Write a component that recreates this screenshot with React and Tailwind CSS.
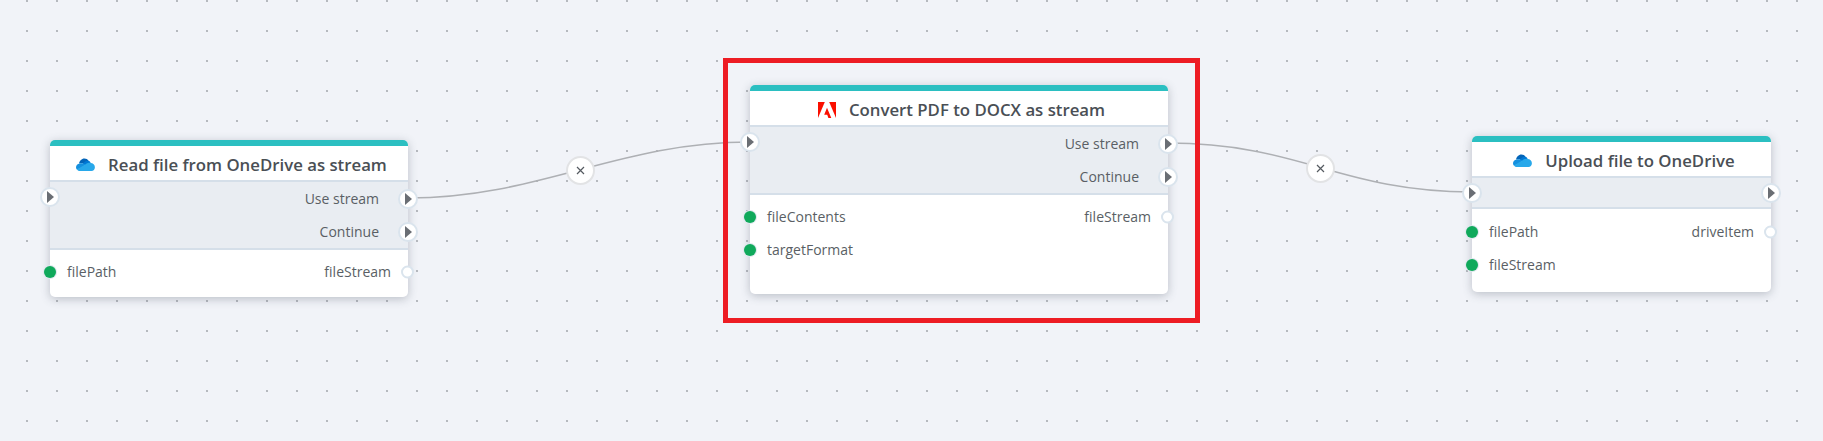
const PORT_LINE = 'absolute -translate-y-1/2 rounded-full'

function OneDriveIcon() {
  return (
    <svg width="19" height="13" viewBox="0 0 19 13" className="shrink-0">
      <path d="M3 5.500C3.600 3 5.600 .6 8.400 .6c1.800 0 3.200.9 4.100 2.200L9 6.500 7.200 5.600C5.800 5 4.400 5 3 5.500Z" fill="#0364b8" />
      <path d="M7 5.300c2-2.300 3.500-3 5.500-2.500 1 .3 1.600 1 2.100 2.100L12 9 7 6.200Z" fill="#0078d4" />
      <path d="M3.500 5.400C1.500 5.600 0 7.300 0 9.200c0 .9.300 1.600.8 2.200L7 9.500l2.500-3.100-2.300-1C6 5 4.800 5.100 3.500 5.400Z" fill="#1490df" />
      <path d="M14.600 4.900c-2-.4-4 .3-5.300 1.700L.8 11.400c.7.900 1.600 1.500 3 1.500h11.700c1.900 0 3.400-1.500 3.400-3.700 0-2.400-1.900-4.300-4.300-4.300Z" fill="#28a8ea" />
    </svg>
  )
}

function AdobeIcon() {
  return (
    <svg width="18" height="16" viewBox="0 0 18 16" className="shrink-0">
      <path d="M0 0h6.800L0 16Z" fill="#fa0f00" />
      <path d="M11.200 0H18v16Z" fill="#fa0f00" />
      <path d="M9 5.800l4.300 10.200h-2.900l-1.200-3.200H6.200Z" fill="#fa0f00" />
    </svg>
  )
}

function ExecPort({ className }) {
  return (
    <span className={`${PORT_LINE} w-[20px] h-[20px] bg-white border-2 border-[#dae4ed] flex items-center justify-center ${className}`}>
      <svg width="7" height="12" viewBox="0 0 7 12" className="ml-[1px]">
        <path d="M0 0l7 6-7 6Z" fill="#6a6e74" />
      </svg>
    </span>
  )
}

function DataRow({ left, right }) {
  return (
    <div className="relative h-[33px] flex items-center justify-between px-[17px]">
      <span>{left}</span>
      <span>{right}</span>
      {left && <span className={`${PORT_LINE} top-1/2 -left-[6px] w-[12px] h-[12px] bg-[#10a95b] shadow-[0_0_0_1px_#dfe7ee]`} />}
      {right && <span className={`${PORT_LINE} top-1/2 -right-[6px] w-[13px] h-[13px] bg-white border-2 border-[#dae4ed]`} />}
    </div>
  )
}

function FlowNode({ place, icon, title, execClass, dataClass, outputs, rows }) {
  return (
    <div className={`absolute ${place} bg-white rounded-[5px] flex flex-col shadow-[0_2px_10px_rgba(70,80,95,0.32)] text-[14px] text-[#5a5f65]`}>
      <div className="h-[6px] rounded-t-[5px] bg-[#2bbfc1]" />
      <div className="h-[36px] pl-[5px] pt-[3px] flex items-center justify-center gap-[13px] border-b-2 border-[#d5dfe9]">
        {icon}
        <span className="text-[16.8px] font-semibold text-[#4a4f55]">{title}</span>
      </div>
      <div className={`relative ${execClass} bg-[#e9edf2] border-b-2 border-[#d5dfe9]`}>
        <ExecPort className="top-[15px] -left-[10px]" />
        {outputs.map((label) => (
          <div key={label || 'out'} className="relative h-full max-h-[33px] min-h-[28px] flex items-center justify-end pr-[29px]">
            {label}
            <ExecPort className="top-1/2 -right-[10px]" />
          </div>
        ))}
      </div>
      <div className={dataClass}>
        {rows.map((r) => (
          <DataRow key={r[0]} left={r[0]} right={r[1]} />
        ))}
      </div>
    </div>
  )
}

function RemoveButton({ place }) {
  return (
    <span className={`absolute ${place} w-[29px] h-[29px] rounded-full bg-white border-2 border-[#e2e3e5] flex items-center justify-center`}>
      <svg width="9" height="9" viewBox="0 0 9 9">
        <path d="M1 1l7 7M8 1l-7 7" stroke="#555a60" strokeWidth="1.200" />
      </svg>
    </span>
  )
}

export default function App() {
  return (
    <div className="relative w-[1823px] h-[441px] overflow-hidden bg-[#f1f3f8] bg-[radial-gradient(circle,#b4b7bd_0.7px,transparent_1.1px)] bg-[length:30px_30px] bg-[position:12px_-14px] font-['Open_Sans',sans-serif]">
      <svg width="1823" height="441" className="absolute inset-0">
        <path d="M408 198C540 198 618 142 750 142" fill="none" stroke="#aeb0b4" strokeWidth="1.500" />
        <path d="M1168 143C1300 143 1340 192 1472 192" fill="none" stroke="#aeb0b4" strokeWidth="1.500" />
      </svg>

      <RemoveButton place="left-[566px] top-[156px]" />
      <RemoveButton place="left-[1306px] top-[154px]" />

      <FlowNode
        place="left-[50px] top-[140px] w-[358px] h-[157px]"
        icon={<OneDriveIcon />}
        title="Read file from OneDrive as stream"
        execClass="h-[68px]"
        dataClass="pt-[5px]"
        outputs={['Use stream', 'Continue']}
        rows={[['filePath', 'fileStream']]}
      />
      <FlowNode
        place="left-[750px] top-[85px] w-[418px] h-[209px]"
        icon={<AdobeIcon />}
        title="Convert PDF to DOCX as stream"
        execClass="h-[68px]"
        dataClass="pt-[5px]"
        outputs={['Use stream', 'Continue']}
        rows={[['fileContents', 'fileStream'], ['targetFormat', '']]}
      />
      <FlowNode
        place="left-[1472px] top-[136px] w-[299px] h-[156px]"
        icon={<OneDriveIcon />}
        title="Upload file to OneDrive"
        execClass="h-[31px]"
        dataClass="pt-[6px]"
        outputs={['']}
        rows={[['filePath', 'driveItem'], ['fileStream', '']]}
      />

      {/* selection marker around the middle step */}
      <div className="absolute left-[723px] top-[58px] w-[477px] h-[265px] border-[5px] border-[#ed1c24]" />
    </div>
  )
}
